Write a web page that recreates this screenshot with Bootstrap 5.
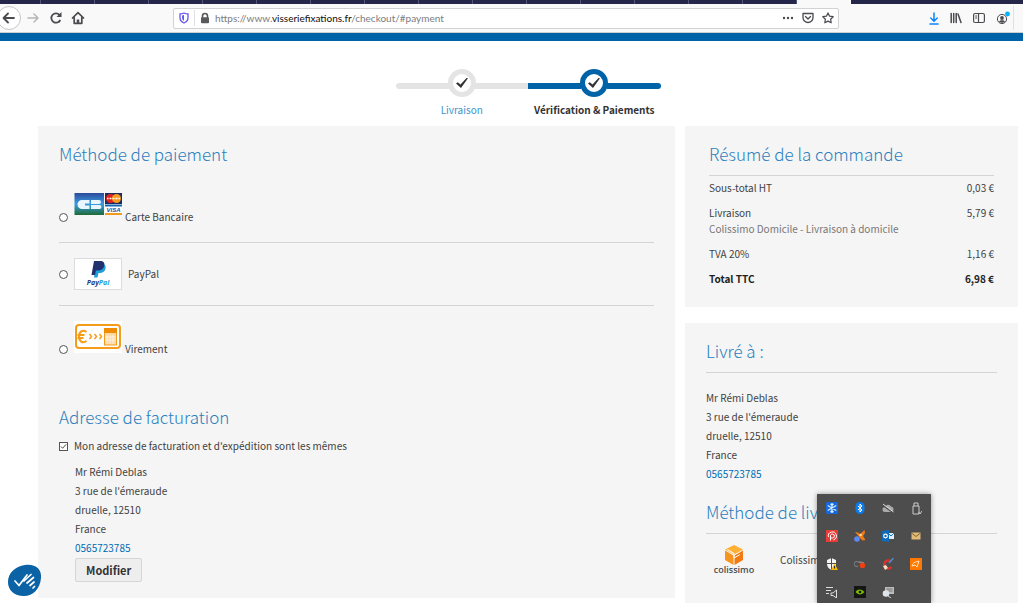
<!DOCTYPE html>
<html lang="fr">
<head>
<meta charset="utf-8">
<meta name="viewport" content="width=device-width, initial-scale=1">
<title>Paiement - visseriefixations.fr</title>
<link rel="stylesheet" href="https://cdn.jsdelivr.net/npm/bootstrap@5.3.0/dist/css/bootstrap.min.css">
<style>
:root{--brand:#0063a7;--panel:#f5f5f5;--rule:#d4d4d4;--ink:#414141}
body{font-family:"Noto Sans CJK SC",sans-serif;font-size:10px;line-height:20px;color:var(--ink);background:#fff}
svg{display:block;flex:none}
/* browser window */
.tabstrip{height:4px;background:#24264a}
.tabstrip i{width:54px;flex:none;border-right:1px solid #53557a}
.tabstrip i:first-child{width:41px}
.tabstrip .tab-on{background:#f9f9fa;border:0}
.toolbar{height:29px;background:#f9f9fa;border-bottom:1px solid #cfcfd2;color:#4a4a4f;padding-right:9px}
.toolbar button{border:0;background:none;padding:0;color:inherit}
.nav-back{width:24px;height:24px;margin-left:-3px;border:1px solid #c6c6c8!important;border-radius:50%;background:#fff!important}
.urlbar{height:21px;margin-left:88px;margin-right:90px;background:#fff;border:1px solid #d2d2d4;border-radius:2px;padding:0 4px}
.urltext{font-family:Lato,sans-serif;color:#7c7c80;white-space:nowrap;margin-left:4px}
.urltext b{font-weight:400;color:#0c0c0d}
.vline{width:1px;height:16px;background:#e0e0e2}
.tools{gap:11px}
.tools .vline{height:24px;margin-left:-8px}
.brandbar{height:8px;background:var(--brand)}
/* checkout */
.page{padding:0 5px 0 38px}
.steps{width:265px;padding-top:28px;margin-bottom:6px}
.steps li{flex:1 1 0;--c:#e4e4e4}
.steps li.active{--c:var(--brand);font-weight:700;color:#333}
.steps .line{height:6px;flex:1 1 0;background:var(--c);margin-top:6px}
.steps li:first-child .line:first-child{border-radius:3px 0 0 3px}
.steps li:last-child .line:last-child{border-radius:0 3px 3px 0}
.steps .dot{width:28px;height:28px;border:5px solid var(--c);border-radius:50%;background:#fff;margin:0 -1px;z-index:1}
.steps .step-name{margin-top:3px;white-space:nowrap}
a{color:#006bb4;text-decoration:none}
.steps a{color:#3d94cf}
.cols{display:grid;grid-template-columns:637fr 333fr;column-gap:10px}
.panel{background:var(--panel);padding:16px 21px}
.panel h2{font-size:17px;line-height:24px;font-weight:300;color:#2b80bd;margin:0;white-space:nowrap}
.panel h2.ruled{border-bottom:1px solid var(--rule);padding-bottom:9px}
.pay{padding:15px 0;gap:6px;border-bottom:1px solid var(--rule)}
.pay:last-child{border:0}
.pay svg{margin-bottom:6px}
.pay label{margin-left:-3px}
.pay.align-items-center svg{margin:0}
.pay.align-items-center label{margin-left:0}
.same-row{gap:6px;margin-top:7px}
.panel h2.billing{margin-top:31px}
input[type=radio],input[type=checkbox]{appearance:none;width:9px;height:9px;flex:none;margin:0;border:1px solid #555;background:#fff}
input[type=radio]{border-radius:50%;margin-bottom:5px}
.align-items-center input[type=radio]{margin-bottom:0}
input[type=checkbox]:checked{background:#fff url("data:image/svg+xml,%3Csvg xmlns='http://www.w3.org/2000/svg' viewBox='0 0 8 8'%3E%3Cpath d='M1 4l2 2 4-4.500' fill='none' stroke='%23333'/%3E%3C/svg%3E")}
address{line-height:19px;margin:0}
.billing-address{padding:6px 0 0 16px}
.billing-address address{margin-bottom:1px}
.btn-mod{font-size:11px;line-height:20px;font-weight:700;color:#333;background:#eee;border:1px solid #d6d6d6;border-radius:2px;padding:1px 10px}
.sum td,.sum th{padding:4px 0 5px;line-height:16px;vertical-align:top;font-weight:400}
.sum .total th,.sum .total td{font-weight:700;color:#222}
.sum small{display:block;font-size:10px;color:#777}
.panel.order{padding-bottom:15px}
.deliver{padding:15px 0 17px}
/* floating elements */
.tray{right:92px;bottom:0;width:114px;height:109px;background:#4d4d4d;box-shadow:0 0 5px #0006;display:grid;grid-template-columns:repeat(4,28px);grid-auto-rows:28px;place-items:center;padding-left:1px;z-index:10}
.helper{left:7px;bottom:5px;border:0;background:none;padding:0;z-index:9}
</style>
</head>
<body class="vh-100 overflow-hidden">
<header>
  <div class="tabstrip d-flex overflow-hidden"><i></i><i></i><i></i><i></i><i></i><i></i><i></i><i></i><i></i><i></i><i></i><i></i><i></i><i></i><i></i><i class="tab-on"></i></div>
  <div class="toolbar d-flex align-items-center">
    <button class="nav-back d-flex align-items-center justify-content-center" aria-label="Précédent"><svg width="14" height="14" viewBox="0 0 14 14" fill="none" stroke="currentColor" stroke-width="1.800" stroke-linecap="round" stroke-linejoin="round"><path d="M12 7H2M6 2.500L1.500 7 6 11.500"/></svg></button>
    <button class="ms-1" aria-label="Suivant"><svg width="16" height="14" viewBox="0 0 16 14" fill="none" stroke="#b5b5b8" stroke-width="1.500" stroke-linecap="round" stroke-linejoin="round"><path d="M3 7h10M9 3l4 4-4 4"/></svg></button>
    <button class="ms-2" aria-label="Actualiser"><svg width="14" height="14" viewBox="0 0 14 14" fill="none" stroke="currentColor" stroke-width="1.800"><path d="M11.300 9A4.700 4.700 0 1 1 10.500 3.800"/><path d="M12.500 1v5h-5z" fill="currentColor" stroke="none"/></svg></button>
    <button class="ms-2" aria-label="Accueil"><svg width="14" height="14" viewBox="0 0 14 14" fill="none" stroke="currentColor" stroke-width="1.700" stroke-linejoin="round" stroke-linecap="round"><path d="M1.500 7L7 1.700 12.500 7M3.200 6.500v5.800h7.600V6.500"/><path d="M7 12V8.500" stroke-width="2.500" stroke-linecap="butt"/></svg></button>
    <div class="urlbar d-flex align-items-center flex-fill">
      <svg width="12" height="12" viewBox="0 0 12 12"><path d="M6 1c1.500.8 2.800 1 4 1v3.500C10 8 8.500 10 6 11 3.500 10 2 8 2 5.500V2c1.200 0 2.500-.2 4-1z" fill="#fff" stroke="#6a50ee" stroke-width="1.300"/><path d="M6 3v5.800C4.700 8 4 7 4 5.500V3.600z" fill="#5163f0"/></svg>
      <span class="vline mx-1"></span>
      <svg width="12" height="12" viewBox="0 0 12 12"><path d="M3.500 6V4a2.500 2.500 0 0 1 5 0v2" fill="none" stroke="#59595c" stroke-width="1.600"/><rect x="2" y="5.300" width="8" height="6" rx="1" fill="#59595c"/></svg>
      <span class="urltext">https://www.<b>visseriefixations.fr</b>/checkout/#payment</span>
      <div class="d-flex align-items-center ms-auto gap-2">
        <svg width="12" height="4" viewBox="0 0 12 4" fill="#4a4a4f"><circle cx="2" cy="2" r="1.200"/><circle cx="6" cy="2" r="1.200"/><circle cx="10" cy="2" r="1.200"/></svg>
        <svg width="12" height="12" viewBox="0 0 12 12" fill="none" stroke="#4a4a4f" stroke-width="1.300" stroke-linecap="round" stroke-linejoin="round"><path d="M1 1.500h10v4a5 5 0 0 1-10 0zM3.500 4.500L6 7l2.500-2.500"/></svg>
        <svg width="12" height="12" viewBox="0 0 12 12" fill="none" stroke="#4a4a4f" stroke-width="1.200" stroke-linejoin="round"><path d="M6 .9l1.600 3.300 3.600.5-2.600 2.500.6 3.600L6 9.100l-3.200 1.700.6-3.600L.8 4.700l3.600-.5z"/></svg>
      </div>
    </div>
    <div class="tools d-flex align-items-center">
      <svg width="10" height="13" viewBox="0 0 10 13" fill="none" stroke="#0a84ff" stroke-width="1.500" stroke-linecap="round" stroke-linejoin="round"><path d="M5 1v8M1.800 6L5 9.200 8.200 6M1 12h8"/></svg>
      <svg width="12" height="12" viewBox="0 0 12 12" stroke="#4a4a4f" stroke-width="1.500" stroke-linecap="round" fill="none"><path d="M1.200 1.500v9M3.700 1.500v9M6.200 1.500v9M8 2l3 8.500"/></svg>
      <svg width="12" height="12" viewBox="0 0 12 12" stroke="#4a4a4f" stroke-width="1.200" fill="none"><rect x=".6" y="1.500" width="10.800" height="9" rx="1.500"/><path d="M5.500 1.500v9M2.200 4h1.800M2.200 6h1.800"/></svg>
      <svg width="14" height="16" viewBox="0 0 14 16"><circle cx="6" cy="9" r="4.600" fill="none" stroke="#4a4a4f"/><circle cx="6" cy="8" r="1.900" fill="#4a4a4f"/><path d="M3 11.500c1-1.600 5-1.600 6 0a4 4 0 0 1-6 0z" fill="#4a4a4f"/><circle cx="11.500" cy="4" r="2.400" fill="#00b3f4"/></svg>
      <span class="vline"></span>
    </div>
  </div>
  <div class="brandbar"></div>
</header>

<main class="page">
  <ol class="steps list-unstyled d-flex mx-auto text-center">
    <li>
      <div class="d-flex align-items-center"><span class="line"></span><span class="dot"><svg width="18" height="18" viewBox="0 0 18 18"><path d="M3 9.500l1.800-1.200 2.700 2.300L13.500 4l1.500.2L8 14z" fill="#333"/></svg></span><span class="line"></span></div>
      <div class="step-name"><a href="#shipping">Livraison</a></div>
    </li>
    <li class="active">
      <div class="d-flex align-items-center"><span class="line"></span><span class="dot"><svg width="18" height="18" viewBox="0 0 18 18"><path d="M3 9.500l1.800-1.200 2.700 2.300L13.500 4l1.500.2L8 14z" fill="#333"/></svg></span><span class="line"></span></div>
      <div class="step-name">Vérification &amp; Paiements</div>
    </li>
  </ol>

  <div class="cols align-items-start">
    <section class="panel">
      <h2>Méthode de paiement</h2>
      <div class="pt-2">
        <div class="pay d-flex align-items-end">
          <input type="radio" name="pay" id="cb">
          <svg width="48" height="32" viewBox="0 0 48 32"><defs><linearGradient id="g" x2="0" y2="1"><stop stop-color="#2b4a9a"/><stop offset=".5" stop-color="#3b9be0"/><stop offset="1" stop-color="#1d6a35"/></linearGradient></defs><rect x=".5" y="4" width="29.500" height="22" fill="url(#g)"/><path d="M15.500 11v3.500H11v2h4.500V20H8a4.500 4.500 0 0 1 0-9zM17 11h8a2 2 0 0 1 0 4h-8zM17 16h8.500a2 2 0 0 1 0 4H17z" fill="#eaf6ff"/><rect x="31" y="4" width="17" height="11" fill="#1c2c62"/><circle cx="36.500" cy="9.500" r="4.500" fill="#e3231b"/><circle cx="42.500" cy="9.500" r="4.500" fill="#f59a1c"/><path d="M33 9.500h13" stroke="#fff" stroke-width="1.500" stroke-dasharray="1 .5"/><rect x="31" y="15" width="17" height="11" fill="#fff"/><path d="M31 16.500h17" stroke="#1565b0" stroke-width="2"/><path d="M31 25h17" stroke="#f29a20" stroke-width="2"/><text x="39.500" y="23" font-size="6" font-weight="700" font-style="italic" text-anchor="middle" fill="#1a4f9c" font-family="Liberation Sans,sans-serif">VISA</text></svg>
          <label for="cb">Carte Bancaire</label>
        </div>
        <div class="pay d-flex align-items-center">
          <input type="radio" name="pay" id="pp">
          <svg width="48" height="32" viewBox="0 0 48 32"><rect x=".5" y=".5" width="47" height="31" fill="#fff" stroke="#dcdcdc"/><path d="M22 6h6c3 0 4.200 2 3.500 4.800-.7 3-3 4.200-6 4.200h-1l-1 4.500h-3.500z" fill="#1da0dc"/><path d="M20 3h6c3.500 0 5 2 4.300 4.800C29.500 11 27.500 12.500 24 12.500h-2L21 17h-3.500z" fill="#213170"/><text x="24" y="27" font-size="7" font-weight="700" font-style="italic" text-anchor="middle" font-family="Open Sans,sans-serif" fill="#253b80">Pay<tspan fill="#1da0dc">Pal</tspan></text></svg>
          <label for="pp">PayPal</label>
        </div>
        <div class="pay d-flex align-items-end">
          <input type="radio" name="pay" id="vir">
          <svg width="48" height="32" viewBox="0 0 48 32"><path fill="#fff" d="M0 0h48v32H0z"/><rect x="2" y="4" width="44" height="23" rx="3" fill="#fff" stroke="#f59c1a" stroke-width="2"/><path d="M12.500 11c-4-3-7.500 0-7.500 4.500s3.500 7.500 7.500 4.500M3.500 14h7M3.500 17h6" stroke="#f59c1a" stroke-width="2" fill="none"/><path d="M15.500 13l2 2.500-2 2.500M20.500 13l2 2.500-2 2.500M25.500 13l2 2.500-2 2.500" stroke="#f59c1a" stroke-width="1.500" fill="none"/><rect x="30.500" y="7.500" width="12" height="16.500" fill="#fbd9a5" stroke="#f59c1a"/><path d="M30 7h13v5H30z" fill="#f08c00"/><path d="M33 14v9M36 14v9M39 14v9M31 16h11M31 19h11" stroke="#fff" stroke-width=".6"/></svg>
          <label for="vir">Virement</label>
        </div>
      </div>
      <h2 class="billing">Adresse de facturation</h2>
      <div class="same-row d-flex align-items-center">
        <input type="checkbox" id="same" checked>
        <label for="same">Mon adresse de facturation et d'expédition sont les mêmes</label>
      </div>
      <div class="billing-address">
        <address>Mr Rémi Deblas<br>3 rue de l'émeraude<br>druelle, 12510<br>France<br><a href="tel:0565723785">0565723785</a></address>
        <button type="button" class="btn-mod">Modifier</button>
      </div>
    </section>

    <aside>
      <section class="panel order px-4 mb-3">
        <h2 class="ruled">Résumé de la commande</h2>
        <table class="sum w-100">
          <tbody>
            <tr><th scope="row">Sous-total HT</th><td class="text-end">0,03 €</td></tr>
            <tr><th scope="row">Livraison<small>Colissimo Domicile - Livraison à domicile</small></th><td class="text-end">5,79 €</td></tr>
            <tr><th scope="row">TVA 20%</th><td class="text-end">1,16 €</td></tr>
            <tr class="total"><th scope="row">Total TTC</th><td class="text-end">6,98 €</td></tr>
          </tbody>
        </table>
      </section>
      <section class="panel">
        <h2 class="ruled">Livré à :</h2>
        <address class="deliver">Mr Rémi Deblas<br>3 rue de l'émeraude<br>druelle, 12510<br>France<br><a href="tel:0565723785">0565723785</a></address>
        <h2 class="ruled">Méthode de livraison</h2>
        <div class="d-flex align-items-start pt-2 pb-3">
          <svg width="58" height="36" viewBox="0 0 58 36" class="me-3"><path d="M28 3l9 4.500-9 5-9-5z" fill="#fdb034"/><path d="M19 8.500l8.500 5v9.500L19 18z" fill="#f7941d"/><path d="M37 8.500l-8.500 5v9.500L37 18z" fill="#f37a10"/><path d="M21.500 7.500l6.500 4V16l6-3.500" fill="none" stroke="#fff" stroke-width="1"/><text x="28" y="31" text-anchor="middle" font-family="Open Sans,sans-serif" font-weight="600" font-size="9" fill="#4a4a4e">colissimo</text></svg>
          <span class="pt-2">Colissimo Domicile</span>
        </div>
      </section>
    </aside>
  </div>
</main>

<button class="helper position-fixed" aria-label="Assistance"><svg width="35" height="35" viewBox="0 0 35 35"><path d="M18 2C28 .5 35 6 34 15c-1 11-8 18-17 18C7 33 1 27 1 19 1 10 8 3.500 18 2z" fill="#0b63a5"/><path d="M8 18l4 4.500L20 12M17 18L24 11.500M20 20l6.500-5.500M23 22.500l4-3.500M26 25l1.500-1.500" stroke="#fff" stroke-width="1.700" stroke-linecap="round" stroke-linejoin="round" fill="none"/></svg></button>

<div class="tray position-fixed">
  <svg width="12" height="12" viewBox="0 0 12 12"><rect width="12" height="12" rx="1" fill="#1668dc"/><path d="M6 1v10M1.700 3.500l8.600 5M10.300 3.500l-8.600 5M4.500 2L6 3.500 7.500 2M4.500 10L6 8.500 7.500 10" stroke="#d7efff" stroke-width="1.200" fill="none"/></svg>
  <svg width="12" height="12" viewBox="0 0 12 12"><rect x="1.500" width="9" height="12" rx="4.500" fill="#0a7cf0"/><path d="M4 4l4 4-2 2V2l2 2-4 4" stroke="#fff" fill="none"/></svg>
  <svg width="12" height="12" viewBox="0 0 12 12"><path d="M3 10a2.500 2.500 0 0 1 0-5 3.300 3.300 0 0 1 6-.5A2.800 2.800 0 0 1 9.500 10z" fill="#aaa"/><path d="M0 2.500l11.500 8.500" stroke="#4d4d4d" stroke-width="1.500"/><path d="M1 2l10.500 8" stroke="#ddd"/></svg>
  <svg width="12" height="13" viewBox="0 0 12 13" fill="none" stroke="#ccc"><path d="M4 4V1h4v3M3 4h6v8H3zM8.500 10l1.500 2 2-3"/></svg>
  <svg width="12" height="12" viewBox="0 0 12 12"><path fill="#ea3b36" d="M0 0h12v12H0z"/><path d="M4.500 10.500V5.500a2 2 0 1 1 2 2.500h-2M2.500 7a4 4 0 1 1 5 2.800" stroke="#fff" fill="none"/></svg>
  <svg width="12" height="12" viewBox="0 0 12 12"><path d="M1 2l3 .5L6 4l4.500-4 .5 3-2 3 2.500 4-3 .5L6 8z" fill="#f47b14"/><circle cx="6.500" cy="5" r="1.300" fill="#ffe0b5"/><circle cx="3" cy="9" r="2.800" fill="#5b8bf5"/></svg>
  <svg width="12" height="12" viewBox="0 0 12 12"><path d="M6 3h6v6H6z" fill="#dceeff"/><path d="M6 3l3 3 3-3" stroke="#1173c9" fill="none"/><path fill="#0f6cbd" d="M0 1l7-1v12l-7-1z"/><circle cx="3.500" cy="6" r="1.800" fill="none" stroke="#fff" stroke-width="1.200"/></svg>
  <svg width="12" height="12" viewBox="0 0 12 12"><path fill="#e2bb78" d="M1.500 2.500h9v7h-9z"/><path d="M1.500 3L6 6.500 10.500 3" stroke="#7d653b" fill="none"/></svg>
  <svg width="12" height="12" viewBox="0 0 12 12"><path d="M5.500 0L10 2v4c0 3-2 5-4.500 6C3 11 1 9 1 6V2z" fill="#f4f4f4"/><path d="M5.500 0v12M1 5.500h9" stroke="#4d4d4d"/><path d="M8.500 5.500L12 12H5z" fill="#f7b500"/><path d="M8.500 8v2.500" stroke="#333"/></svg>
  <svg width="12" height="12" viewBox="0 0 12 12"><path d="M8 4H4a2.500 2.500 0 1 0 0 4M5 4.500h5" stroke="#888" fill="none"/><circle cx="8.500" cy="7.500" r="2.700" fill="#f0400e"/></svg>
  <svg width="12" height="12" viewBox="0 0 12 12"><path d="M9 3.500a4 4 0 1 0 .5 5.500" stroke="#d8322a" stroke-width="2.600" fill="none"/><path d="M11.500 0L7 5" stroke="#4a90d9" stroke-width="1.500"/><path d="M1 8l3-1 2 3-3 2z" fill="#f3ddc0"/></svg>
  <svg width="12" height="12" viewBox="0 0 12 12"><path fill="#ff7800" d="M0 0h12v12H0z"/><path d="M2 8c1-4 4-4 7-5L7 9 5 7z" stroke="#ffe3c5" fill="none"/></svg>
  <svg width="12" height="12" viewBox="0 0 12 12" stroke="#ddd" fill="none"><path d="M0 1.500h7M0 4.500h5M0 7.500h3M5 7h2l3.500-3v8L7 9.500H5z"/></svg>
  <svg width="12" height="12" viewBox="0 0 12 12"><path fill="#151515" d="M0 0h12v12H0z"/><path d="M1.500 6C4 2.500 8 3 10.500 6 8 9 4 9.500 1.500 6z" fill="#76b900"/><circle cx="6" cy="6" r="1.300" fill="#151515"/></svg>
  <svg width="12" height="12" viewBox="0 0 12 12"><path fill="#bbb" d="M3 1h9v7H3z"/><path d="M4.500 3h6M4.500 5h6" stroke="#777"/><circle cx="4" cy="7.500" r="3.300" fill="#dde5ea"/><path d="M6 10l3 2" stroke="#ddd"/></svg>
</div>
<script src="https://cdn.jsdelivr.net/npm/bootstrap@5.3.0/dist/js/bootstrap.bundle.min.js"></script>
</body>
</html>
